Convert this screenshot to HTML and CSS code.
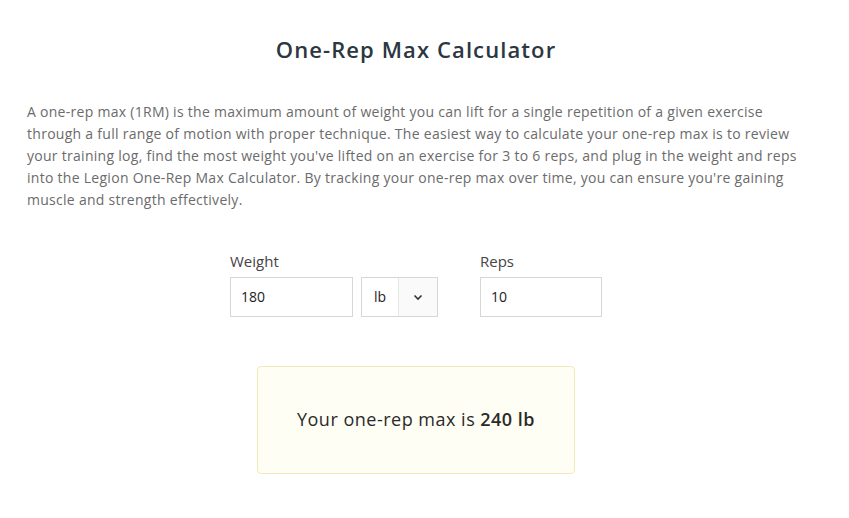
FILE: index.html
```html
<!DOCTYPE html>
<html>
<head>
    <title>One-Rep Max Calculator</title>
    <link rel="stylesheet" href="styles.css">
</head>
<body>
    <div class="calculator">
        <h1 class="title">One-Rep Max Calculator</h1>
        <p class="intro">A one-rep max (1RM) is the maximum amount of weight you can lift for a single repetition of a given exercise through a full range of motion with proper technique. The easiest way to calculate your one-rep max is to review your training log, find the most weight you've lifted on an exercise for 3 to 6 reps, and plug in the weight and reps into the Legion One-Rep Max Calculator. By tracking your one-rep max over time, you can ensure you're gaining muscle and strength effectively.</p>
        <div class="form">
            <div class="field">
                <label class="label">Weight</label>
                <div class="row">
                    <div class="input weight">180</div>
                    <div class="unit">
                        <span class="unit-text">lb</span>
                        <span class="unit-arrow">
                            <svg width="10" height="7" viewBox="0 0 10 7"><path d="M1.5 1.5 L5 5 L8.5 1.5" fill="none" stroke="#333" stroke-width="1.6"/></svg>
                        </span>
                    </div>
                </div>
            </div>
            <div class="field">
                <label class="label">Reps</label>
                <div class="input reps">10</div>
            </div>
        </div>
        <div class="result">Your one-rep max is <strong>240 lb</strong></div>
    </div>
</body>
</html>
```
FILE: styles.css
```css
body {
    margin: 0;
    background-color: white;
    font-family: "Open Sans", sans-serif;
    color: #333;
}
.calculator {
    width: 778px;
    margin-left: 27px;
    padding-top: 35px;
}
.title {
    margin: 0;
    text-align: center;
    font-size: 22px;
    font-weight: 600;
    color: #2c3741;
    letter-spacing: 1.1px;
    line-height: 28px;
}
.intro {
    margin: 38px 0 0;
    font-size: 14px;
    letter-spacing: 0.28px;
    line-height: 22px;
    color: #6b6b6b;
}
.form {
    display: flex;
    justify-content: center;
    gap: 42px;
    margin-top: 40px;
}
.field {
    display: flex;
    flex-direction: column;
}
.label {
    font-size: 15px;
    color: #444;
    line-height: 20px;
    margin-bottom: 6px;
}
.row {
    display: flex;
    gap: 8px;
}
.input {
    box-sizing: border-box;
    height: 40px;
    border: 1px solid #d6d6d6;
    padding: 0 10px;
    font-size: 14px;
    line-height: 38px;
    color: #222;
}
.weight {
    width: 123px;
}
.reps {
    width: 122px;
}
.unit {
    box-sizing: border-box;
    display: flex;
    width: 77px;
    height: 40px;
    border: 1px solid #d6d6d6;
    font-size: 14px;
}
.unit-text {
    width: 36px;
    text-align: center;
    line-height: 38px;
    color: #222;
}
.unit-arrow {
    flex: 1;
    display: flex;
    align-items: center;
    justify-content: center;
    background-color: #fafafa;
    border-left: 1px solid #e8e8e8;
}
.result {
    box-sizing: border-box;
    width: 318px;
    height: 108px;
    margin: 49px auto 0;
    display: flex;
    align-items: center;
    justify-content: center;
    background-color: #fffef4;
    border: 1px solid #f1ebb5;
    border-radius: 4px;
    font-size: 18px;
    letter-spacing: 0.5px;
    color: #2a2a2a;
    padding-bottom: 2px;
}
.result strong {
    font-weight: 600;
    margin-left: 5px;
}
```
